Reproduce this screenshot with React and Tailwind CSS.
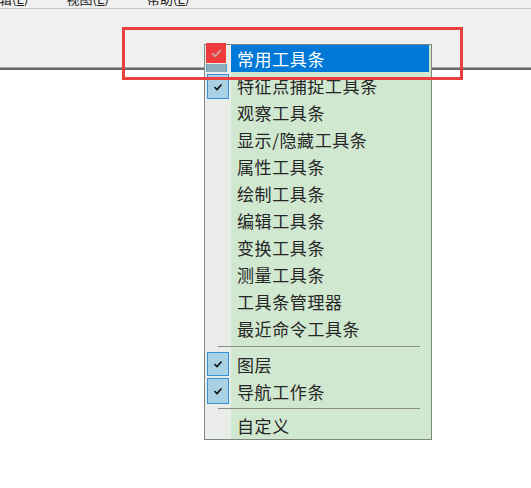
import React from "react";

const Check = ({ color = "#111", w = 10, h = 8, sw = 1.6 }) => (
  <svg width={w} height={h} viewBox="0 0 10 8">
    <path d="M1.5 4.2 L4 6.5 L8.5 1.5" fill="none" stroke={color} strokeWidth={sw} />
  </svg>
);

const BlueBox = ({ h = 25 }) => (
  <div
    className="w-[22px] border border-[#3a8fd6] bg-[#a8d2e4] flex items-center justify-center"
    style={{ height: h }}
  >
    <Check />
  </div>
);

const Item = ({ label, left, highlight }) => (
  <div className="flex h-[27px]">
    <div className="w-[26px] shrink-0 relative">{left}</div>
    <div
      className={
        "flex-1 flex items-center pl-[6px] mr-[2px] " +
        (highlight ? "bg-[#0078d7] text-white" : "text-[#262626]")
      }
    >
      {label}
    </div>
  </div>
);

const Sep = ({ h }) => (
  <div className="flex items-center" style={{ height: h }}>
    <div className="ml-[13px] mr-[11px] flex-1 h-px bg-[#8c8c8c]" />
  </div>
);

export default function App() {
  return (
    <div
      className="relative w-[531px] h-[488px] bg-white overflow-hidden"
      style={{ fontFamily: '"Noto Sans CJK SC", "Liberation Sans", sans-serif' }}
    >
      <div className="h-[70px] bg-[#f0f0f0] flex flex-col">
        <div className="h-[8px] overflow-hidden relative">
          <div className="absolute left-0 top-[-11px] flex gap-[38px] text-[13px] text-[#222] whitespace-nowrap">
            <span className="ml-[-14px]">编辑(<u>E</u>)</span>
            <span>视图(<u>E</u>)</span>
            <span>帮助(<u>E</u>)</span>
          </div>
        </div>
        <div className="h-px bg-[#c9c9c9]" />
        <div className="flex-1" />
        <div className="h-px bg-[#a8a8a8]" />
        <div className="h-[2px] bg-[#6a6a6a]" />
      </div>

      {/* context menu */}
      <div
        className="absolute left-[204px] top-[44px] w-[228px] border border-[#7d877d] text-[17px] tracking-[0.6px] leading-none"
        style={{ background: "linear-gradient(to right, #e9ece9 0 26px, #d0e7d0 26px)" }}
      >
        <Item
          highlight
          label="常用工具条"
          left={
            <>
              <div className="absolute left-[1px] top-[-2px] w-[20px] h-[20px] bg-[#ef3b3b] flex items-center justify-center">
                <Check color="#c8a0a0" w={13} h={10} sw={1.5} />
              </div>
              <div className="absolute left-[1px] top-[19px] w-[21px] h-[8px] bg-[#8aaebb] border-x border-[#5f9bbf]" />
            </>
          }
        />
        <Item
          label="特征点捕捉工具条"
          left={
            <div className="absolute left-[2px] top-[2px]">
              <BlueBox h={25} />
            </div>
          }
        />
        <Item label="观察工具条" />
        <Item label="显示/隐藏工具条" />
        <Item label="属性工具条" />
        <Item label="绘制工具条" />
        <Item label="编辑工具条" />
        <Item label="变换工具条" />
        <Item label="测量工具条" />
        <Item label="工具条管理器" />
        <Item label="最近命令工具条" />
        <Sep h={9} />
        <Item
          label="图层"
          left={
            <div className="absolute left-[2px] top-[1px]">
              <BlueBox h={24} />
            </div>
          }
        />
        <Item
          label="导航工作条"
          left={
            <div className="absolute left-[2px] top-[0px]">
              <BlueBox h={26} />
            </div>
          }
        />
        <Sep h={7} />
        <Item label="自定义" />
      </div>

      {/* red annotation */}
      <div className="absolute left-[122px] top-[27px] w-[341px] h-[53px] border-[3px] border-[#e8403f]" />
    </div>
  );
}
